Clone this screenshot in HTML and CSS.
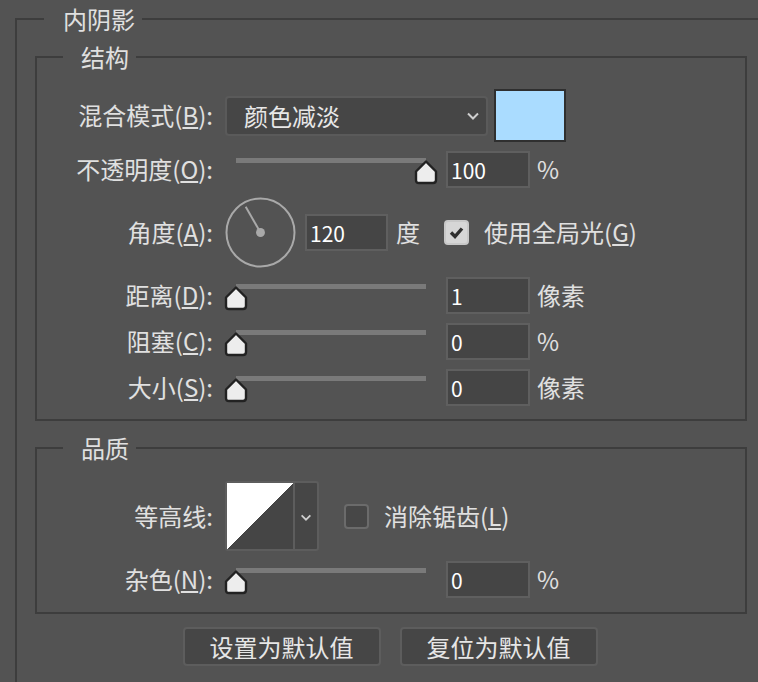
FILE: index.html
```html
<!DOCTYPE html>
<html lang="zh-CN">
<head>
    <meta charset="UTF-8">
    <title>内阴影</title>
    <link rel="stylesheet" href="styles.css">
</head>
<body>
    <fieldset class="panel">
        <legend>内阴影</legend>

        <fieldset class="section">
            <legend>结构</legend>
            <div class="rows">
                <div class="row">
                    <label class="label">混合模式(<u>B</u>):</label>
                    <div class="select">
                        <span>颜色减淡</span>
                        <svg class="chevron" viewBox="0 0 12 8"><path d="M1 1.5 L6 6.5 L11 1.5" /></svg>
                    </div>
                    <div class="swatch"></div>
                </div>

                <div class="row">
                    <label class="label">不透明度(<u>O</u>):</label>
                    <div class="slider" style="--v: 1">
                        <div class="track"></div>
                        <svg class="thumb" viewBox="0 0 24 25"><path d="M12 1.5 L22 11.5 V20 Q22 23 19 23 H5 Q2 23 2 20 V11.5 Z" /></svg>
                    </div>
                    <input class="field" type="text" value="100">
                    <span class="unit">%</span>
                </div>

                <div class="row">
                    <label class="label">角度(<u>A</u>):</label>
                    <svg class="dial" viewBox="0 0 72 72">
                        <circle cx="36" cy="36" r="34.5" />
                        <line x1="36" y1="36" x2="21" y2="10" />
                        <circle class="dot" cx="36" cy="36" r="4.5" />
                    </svg>
                    <input class="field short" type="text" value="120">
                    <span class="unit deg">度</span>
                    <span class="check checked">
                        <svg viewBox="0 0 21 21"><path d="M5 10.5 L9 14.5 L16 6.5" /></svg>
                    </span>
                    <span class="check-label">使用全局光(<u>G</u>)</span>
                </div>

                <div class="row">
                    <label class="label">距离(<u>D</u>):</label>
                    <div class="slider" style="--v: 0">
                        <div class="track"></div>
                        <svg class="thumb" viewBox="0 0 24 25"><path d="M12 1.5 L22 11.5 V20 Q22 23 19 23 H5 Q2 23 2 20 V11.5 Z" /></svg>
                    </div>
                    <input class="field" type="text" value="1">
                    <span class="unit">像素</span>
                </div>

                <div class="row">
                    <label class="label">阻塞(<u>C</u>):</label>
                    <div class="slider" style="--v: 0">
                        <div class="track"></div>
                        <svg class="thumb" viewBox="0 0 24 25"><path d="M12 1.5 L22 11.5 V20 Q22 23 19 23 H5 Q2 23 2 20 V11.5 Z" /></svg>
                    </div>
                    <input class="field" type="text" value="0">
                    <span class="unit">%</span>
                </div>

                <div class="row">
                    <label class="label">大小(<u>S</u>):</label>
                    <div class="slider" style="--v: 0">
                        <div class="track"></div>
                        <svg class="thumb" viewBox="0 0 24 25"><path d="M12 1.5 L22 11.5 V20 Q22 23 19 23 H5 Q2 23 2 20 V11.5 Z" /></svg>
                    </div>
                    <input class="field" type="text" value="0">
                    <span class="unit">像素</span>
                </div>
            </div>
        </fieldset>

        <fieldset class="section quality">
            <legend>品质</legend>
            <div class="rows">
                <div class="row">
                    <label class="label">等高线:</label>
                    <div class="contour">
                        <svg class="contour-preview" viewBox="0 0 66 66" shape-rendering="crispEdges">
                            <rect width="66" height="66" fill="#454545" />
                            <polygon points="0,0 66,0 0,66" fill="#ffffff" />
                        </svg>
                        <div class="contour-arrow">
                            <svg class="chevron" viewBox="0 0 12 8"><path d="M1 1.5 L6 6.5 L11 1.5" /></svg>
                        </div>
                    </div>
                    <span class="check"></span>
                    <span class="check-label">消除锯齿(<u>L</u>)</span>
                </div>

                <div class="row">
                    <label class="label">杂色(<u>N</u>):</label>
                    <div class="slider" style="--v: 0">
                        <div class="track"></div>
                        <svg class="thumb" viewBox="0 0 24 25"><path d="M12 1.5 L22 11.5 V20 Q22 23 19 23 H5 Q2 23 2 20 V11.5 Z" /></svg>
                    </div>
                    <input class="field" type="text" value="0">
                    <span class="unit">%</span>
                </div>
            </div>
        </fieldset>

        <div class="buttons">
            <button class="btn">设置为默认值</button>
            <button class="btn">复位为默认值</button>
        </div>
    </fieldset>
</body>
</html>
```

FILE: styles.css
```css
* {
    margin: 0;
    padding: 0;
    box-sizing: border-box;
}

body {
    width: 758px;
    height: 682px;
    overflow: hidden;
    background: #535353;
    color: #e0e0e0;
    font-family: "Noto Sans CJK SC", "Noto Sans", sans-serif;
    font-size: 24px;
}

fieldset {
    min-width: 0;
    border: 2px solid #3d3d3d;
}

legend {
    line-height: 28px;
    font-size: 24px;
}

/* outer group, its right and bottom edges sit just outside the window */
.panel {
    margin: 5px 0 0 15px;
    width: 745px;
    height: 679px;
    padding: 10px 0 0 18px;
}

.panel > legend {
    margin-left: 9px;
    padding: 0 7px 0 19px;
}

.section {
    width: 712px;
    padding: 18px 0 13px 0;
}

.section > legend {
    margin-left: 26px;
    padding: 0 7px 0 18px;
}

.quality {
    margin-top: 13px;
    padding: 19px 0 14px 0;
}

.rows {
    display: flex;
    flex-direction: column;
    gap: 9px;
}

.quality .rows {
    gap: 10px;
}

.row {
    display: flex;
    align-items: center;
}

.label {
    width: 176px;
    margin-right: 12px;
    text-align: right;
    line-height: 1.2;
    white-space: nowrap;
}

u {
    text-underline-offset: 2px;
}

/* dropdown */
.select {
    width: 263px;
    height: 40px;
    display: flex;
    align-items: center;
    justify-content: space-between;
    padding: 0 7px 0 17px;
    background: #464646;
    border: 2px solid #5a5a5a;
    border-radius: 4px;
    color: #e8e8e8;
    line-height: 1;
}

.chevron {
    width: 12px;
    height: 8px;
}

.chevron path {
    fill: none;
    stroke: #cfcfcf;
    stroke-width: 2;
}

.swatch {
    width: 72px;
    height: 53px;
    margin-left: 6px;
    background: #aadcff;
    border: 2px solid #2f2f2f;
}

/* sliders */
.slider {
    position: relative;
    width: 213px;
    height: 37px;
}

.track {
    position: absolute;
    left: 11px;
    right: 12px;
    top: 7px;
    height: 5px;
    background: #7a7a7a;
}

.thumb {
    position: absolute;
    top: 9px;
    left: calc(var(--v) * 190px - 1px);
    width: 24px;
    height: 25px;
}

.thumb path {
    fill: #ededed;
    stroke: #222222;
    stroke-width: 2.4;
    stroke-linejoin: round;
}

.field {
    width: 84px;
    height: 37px;
    margin-left: 8px;
    padding-left: 3px;
    background: #454545;
    border: 2px solid #5f5f5f;
    color: #ffffff;
    font-family: inherit;
    font-size: 21px;
    outline: none;
}

.field.short {
    width: 83px;
    margin-left: 9px;
}

.unit {
    margin-left: 7px;
    line-height: 1.2;
}

.unit.deg {
    margin-left: 8px;
}

/* angle dial */
.dial {
    width: 71px;
    height: 71px;
}

.dial circle,
.dial line {
    fill: none;
    stroke: #a9a9a9;
    stroke-width: 2;
}

.dial .dot {
    fill: #a9a9a9;
    stroke: none;
}

/* checkboxes */
.check {
    width: 25px;
    height: 25px;
    margin-left: 24px;
    background: #474747;
    border: 2px solid #6b6b6b;
    border-radius: 4px;
}

.check.checked {
    background: #d6d6d6;
    border-color: #c8c8c8;
    display: flex;
}

.check svg {
    width: 21px;
    height: 21px;
}

.check path {
    fill: none;
    stroke: #303030;
    stroke-width: 3.4;
}

.check-label {
    margin-left: 15px;
    line-height: 1.2;
}

/* contour picker */
.contour {
    display: flex;
    width: 94px;
    height: 70px;
    border: 2px solid #5d5d5d;
    border-radius: 3px;
    background: #464646;
}

.quality .check {
    margin-left: 25px;
}

.contour-preview {
    width: 66px;
    height: 66px;
}

.contour-arrow {
    flex: 1;
    display: flex;
    align-items: center;
    justify-content: center;
    border-left: 2px solid #5d5d5d;
    padding-top: 2px;
}

.contour-arrow .chevron {
    width: 12px;
    height: 7px;
}

.buttons {
    width: 710px;
    margin-top: 13px;
    display: flex;
    justify-content: center;
    gap: 19px;
}

.btn {
    width: 198px;
    height: 39px;
    background: #464646;
    border: 2px solid #5d5d5d;
    border-radius: 4px;
    color: #e6e6e6;
    font-family: inherit;
    font-size: 24px;
    line-height: 1;
}
```
